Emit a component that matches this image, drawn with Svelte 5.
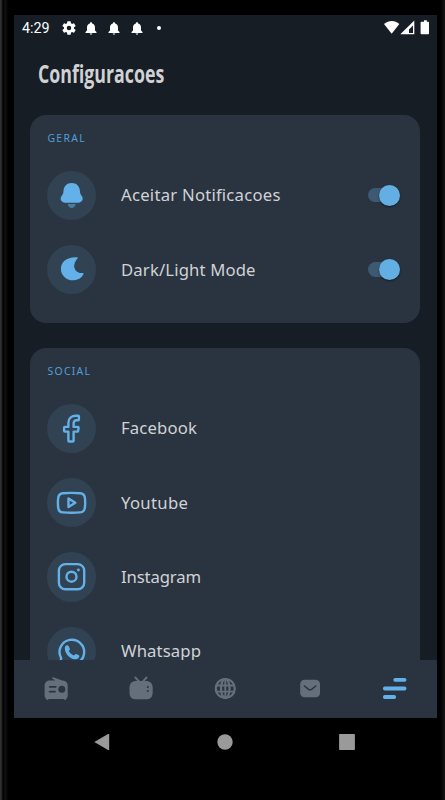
<script lang="ts">
  type Icon = 'bell' | 'moon' | 'facebook' | 'youtube' | 'instagram' | 'whatsapp'

  type Row = {
    icon: Icon
    label: string
    width: number
  }

  const socialRows: Row[] = [
    { icon: 'facebook', label: 'Facebook', width: 76 },
    { icon: 'youtube', label: 'Youtube', width: 67 },
    { icon: 'instagram', label: 'Instagram', width: 80 },
    { icon: 'whatsapp', label: 'Whatsapp', width: 80 }
  ]

  let generalRows = $state<(Row & { enabled: boolean })[]>([
    { icon: 'bell', label: 'Aceitar Notificacoes', width: 159.5, enabled: true },
    { icon: 'moon', label: 'Dark/Light Mode', width: 134.5, enabled: true }
  ])
</script>

{#snippet rowIcon(icon: Icon)}
  <svg class="row-icon" viewBox="0 0 49.3 49.3" aria-hidden="true">
    {#if icon === 'bell'}
      <path class="solid" d="M24.7 11.9c-4.9 0-8 3.5-8.2 7.9-.1 2.6-.6 3.5-1.9 5.2-2.200 3-.2 6.700 3.600 6.700h13c3.800 0 5.800-3.700 3.600-6.700-1.300-1.700-1.800-2.600-1.900-5.200-.2-4.400-3.300-7.900-8.200-7.900z" />
      <path class="solid" opacity="0.5" d="M20.7 32.700c2.200.5 5.800.5 8 0-.3 2.700-1.700 4.200-4 4.200s-3.700-1.500-4-4.200z" />
    {:else if icon === 'moon'}
      <path class="solid" d="M29.800 12.200c1-.1 1.200.6.6 1.300-3.600 4.400-4.200 9-1.400 12.200 1.600 1.800 3.800 2.500 6.500 2.300.9-.1 1.300.4.9 1.300-1.700 3.700-5.500 6-10.300 6-6.900 0-12.200-4.900-12.200-11.600 0-6.900 6-12.100 15.900-11.500z" />
    {:else if icon === 'facebook'}
      <path d="M26.600 36.700v-9.100h3.700c.5 0 .7-.2.8-.7l.5-3.200c0-.5-.2-.8-.7-.8h-4.300v-3.100c0-2.400 1.100-3.600 3-3.600h1.500c.5 0 .8-.3.8-.8v-2.800c0-.5-.3-.8-.8-.8H29c-4.500 0-7.600 2.800-7.600 7v4.100h-3.500c-.5 0-.8.3-.8.8v3.100c0 .5.3.8.8.8h3.500v9.100c0 .5.3.8.8.8h3.600c.5 0 .8-.3.8-.8z" />
    {:else if icon === 'youtube'}
      <path d="M16 15.200q8.600-.7 17.200 0 4 .3 4.600 4.200.8 5.400 0 10.800-.6 3.900-4.600 4.200-8.600.7-17.200 0-4.100-.3-4.700-4.200-.8-5.400 0-10.800.6-3.900 4.700-4.200z" />
      <path d="M21.500 20.400v8.600l6.800-4.300z" />
    {:else if icon === 'instagram'}
      <rect x="11.9" y="12.1" width="25.3" height="25.1" rx="6.5" />
      <circle cx="24.5" cy="24.7" r="5" />
      <circle class="solid" cx="31.4" cy="18" r="1.4" />
    {:else}
      <path d="M14.200 31.200a12.300 12.300 0 1 1 4.500 4.500l-5.800 1.600z" />
      <path class="solid" d="M17.900 19.900c.6-1.300 1.800-1.800 2.800-1.600.9.200 1.600 2.100 2.200 3.500.3.800-.7 1.600-1.100 2.200 1.400 2.500 3 3.600 5.200 4.500.7-.5 1.500-1.600 2.200-1.400 1.400.5 3.400 1.400 3.200 2.200-.5 1.900-2 3-4.300 2.900-5.700-.4-11.100-6.600-10.200-12.300z" />
    {/if}
  </svg>
{/snippet}

{#snippet rowLabel(row: Row)}
  <svg class="row-label" height="28" viewBox="0 0 180 28" width="180">
    <text x="0" y="20" textLength={row.width}>{row.label}</text>
  </svg>
{/snippet}

<div class="phone">
  <div class="screen">
    <header class="status-bar">
      <div class="status-left">
        <span class="time">4:29</span>
        <svg class="gear" width="14" height="14" viewBox="2 2 20 20">
          <path d="M19.14 12.94c.04-.3.06-.61.06-.94s-.02-.64-.07-.94l2.03-1.58a.5.5 0 0 0 .12-.61l-1.92-3.32a.49.49 0 0 0-.59-.22l-2.39.96a7 7 0 0 0-1.62-.94l-.36-2.54a.48.48 0 0 0-.48-.41h-3.84a.47.47 0 0 0-.47.41l-.36 2.54c-.59.24-1.13.57-1.62.94l-2.39-.96a.48.48 0 0 0-.59.22L2.74 8.87a.48.48 0 0 0 .12.61l2.03 1.58a6 6 0 0 0 0 1.88l-2.03 1.58a.5.5 0 0 0-.12.61l1.92 3.32c.12.22.37.29.59.22l2.39-.96c.5.38 1.03.7 1.62.94l.36 2.54c.05.24.24.41.48.41h3.84c.24 0 .44-.17.47-.41l.36-2.54a7 7 0 0 0 1.62-.94l2.39.96c.22.08.47 0 .59-.22l1.92-3.32a.47.47 0 0 0-.12-.61zM12 15.2a3.2 3.2 0 1 1 0-6.4 3.2 3.2 0 0 1 0 6.4z" />
        </svg>
        {#each [0, 1, 2] as bell (bell)}
          <svg class="bell" width="12" height="13" viewBox="0 0 12 13">
            <path d="M6 .2c.7 0 1.100.5 1.100 1.200 2 .5 2.900 2 2.900 4v3.200l1.500 1.500v.8H.5v-.8L2 8.600V5.400c0-2 .9-3.500 2.900-4C4.900.7 5.300.2 6 .2zM4.700 11.500h2.600c0 .7-.6 1.200-1.300 1.200s-1.300-.5-1.300-1.200z" />
          </svg>
        {/each}
        <span class="dot"></span>
      </div>
      <svg class="signals" width="47" height="16" viewBox="0 0 47 16">
        <path d="M0 4C4.500.1 11.200.1 15.300 4L7.700 13.700z" />
        <path fill-rule="evenodd" d="M30.300.4v13.800H16.300zM29 5.500l-4 4v3.600h4z" />
        <path d="M40 .3h2.800v1.400h1.500c.4 0 .7.3.7.7v11.200c0 .4-.3.7-.7.7h-7c-.4 0-.7-.3-.7-.7V2.400c0-.4.3-.7.7-.7H40z" />
      </svg>
    </header>

    <main class="content">
      <h1>Configuracoes</h1>

      <section class="card">
        <h2>GERAL</h2>
        {#each generalRows as row (row.icon)}
          <div class="row">
            <span class="circle">{@render rowIcon(row.icon)}</span>
            {@render rowLabel(row)}
            <button
              class="switch"
              class:off={!row.enabled}
              role="switch"
              aria-checked={row.enabled}
              aria-label={row.label}
              onclick={() => (row.enabled = !row.enabled)}
            >
              <span class="thumb"></span>
            </button>
          </div>
        {/each}
      </section>

      <section class="card">
        <h2>SOCIAL</h2>
        {#each socialRows as row (row.icon)}
          <div class="row">
            <span class="circle">{@render rowIcon(row.icon)}</span>
            {@render rowLabel(row)}
          </div>
        {/each}
      </section>
    </main>

    <nav class="tab-bar">
      <span class="tab">
        <svg viewBox="0 0 28 28">
          <path fill-rule="evenodd" d="M11.1 2.200l9.200 3.200c3.700.2 5.400 2 5.400 5.700v9c0 2.200-.6 3.300-1.600 3.800-.2 1.300-2.100 1.300-2.300.2H6.600c-.2 1.100-2.100 1.100-2.300-.2-1-.5-1.700-1.600-1.700-3.800v-9c0-3.700 2-5.700 5.600-5.700h5.200l-2.800-1.600c-1-.5-.5-1.900.5-1.600zM7.700 11h6c1.200 0 1.200 1.800 0 1.800h-6c-1.200 0-1.200-1.800 0-1.800zm0 4.800h5.300c1.200 0 1.200 1.800 0 1.800H7.700c-1.200 0-1.200-1.800 0-1.800zm12.100-5a3.500 3.500 0 1 0 0 7 3.500 3.500 0 0 0 0-7z" />
        </svg>
      </span>
      <span class="tab">
        <svg viewBox="0 0 28 28">
          <path class="line" stroke-width="1.9" d="M8.300 2.500l4.200 4.300M19.600 2.500l-4.100 4.300" />
          <path fill-rule="evenodd" d="M9.500 5.900h9.200c4.600 0 7 2.400 7 6.800v4.700c0 4.500-2.400 6.900-7 6.900H9.500c-4.600 0-7-2.400-7-6.900v-4.700c0-4.400 2.400-6.800 7-6.800zM20.800 10.900a1 1 0 1 0 0 2 1 1 0 0 0 0-2zm0 4a1 1 0 1 0 0 2 1 1 0 0 0 0-2z" />
        </svg>
      </span>
      <span class="tab">
        <svg viewBox="0 0 28 28">
          <g class="line" stroke-width="2.2">
            <circle cx="14.3" cy="13.5" r="9.5" />
            <ellipse cx="14.3" cy="13.5" rx="4.3" ry="9.5" />
            <path stroke-width="1.9" d="M5.500 10.500h17.600M5.500 16.600h17.600M14.300 4v19" />
          </g>
        </svg>
      </span>
      <span class="tab">
        <svg viewBox="0 0 28 28">
          <rect x="4.2" y="4.8" width="19.8" height="17.4" rx="4.3" />
          <path class="mail-line" d="M8.400 11l4.200 3.300q1.500 1 3 0l4.200-3.300" />
        </svg>
      </span>
      <span class="tab active">
        <svg viewBox="0 0 28 28">
          <rect x="12.4" y="2.900" width="13" height="3.9" rx="1.7" />
          <rect x="2" y="11.6" width="23.4" height="3.9" rx="1.7" />
          <rect x="2" y="20" width="13" height="3.9" rx="1.7" />
        </svg>
      </span>
    </nav>
  </div>

  <div class="system-nav">
    <svg width="18" height="18" viewBox="0 0 18 18"><path d="M1.300 9 15 1q1.200-.4 1.200.5v15q0 .9-1.200.5z" /></svg>
    <svg width="18" height="18" viewBox="0 0 18 18"><circle cx="9" cy="9" r="7.7" /></svg>
    <svg width="18" height="18" viewBox="0 0 18 18"><rect x="1.1" y="1.1" width="15.8" height="15.8" rx=".7" /></svg>
  </div>
</div>

<style>
  :global(body) {
    margin: 0;
    background: #000;
  }

  .phone {
    box-sizing: border-box;
    width: 445px;
    height: 800px;
    padding: 15px 8px 0 14px;
    overflow: hidden;
    background:
      linear-gradient(90deg, #303030 0 1px, #1a1a1a 2px, #000 3px, #121212 5px, #000 8px) left / 8px 100% no-repeat,
      linear-gradient(90deg, #000, #0c0c0c 3px, #161616 5px) right / 5px 100% no-repeat,
      #000;
  }

  .screen {
    display: flex;
    flex-direction: column;
    height: 703px;
    background: #161d25;
  }

  .status-bar {
    display: flex;
    flex: none;
    justify-content: space-between;
    height: 26px;
    fill: #fff;
    color: #fff;
  }

  .status-left {
    display: flex;
    align-items: center;
    padding-left: 8px;
  }

  .time {
    width: 39.5px;
    font: 14.3px/26px Roboto, sans-serif;
  }

  .gear {
    margin-right: 9.5px;
  }

  .bell {
    margin-right: 10.8px;
  }

  .dot {
    width: 4.5px;
    height: 4.5px;
    margin-left: 3.5px;
    border-radius: 50%;
    background: #fff;
  }

  .signals {
    margin: 5px 6px 0 0;
  }

  .content {
    display: flex;
    flex: 1;
    flex-direction: column;
    gap: 25px;
    min-height: 0;
    padding: 0 17px 0 16px;
    overflow: hidden;
  }

  h1 {
    height: 36px;
    margin: 15px 0 -2px 8px;
    color: #d0d1d3;
    font: 700 24.5px/36px 'Open Sans', sans-serif;
    transform: scaleX(0.725);
    transform-origin: left;
  }

  .card {
    flex: none;
    box-sizing: border-box;
    height: 208px;
    padding: 15px 17px 0;
    border-radius: 16px;
    background: #2a3440;
  }

  .card + .card {
    height: 360px;
  }

  h2 {
    height: 16px;
    margin: 0 0 12px 0.5px;
    color: #509fd8;
    font: 400 10.4px/16px 'Noto Sans', sans-serif;
    letter-spacing: 1.3px;
  }

  .row {
    display: flex;
    align-items: center;
    height: 74.4px;
  }

  .circle {
    flex: none;
    width: 49.3px;
    height: 49.3px;
    margin-right: 24.7px;
    border-radius: 50%;
    background: #314252;
  }

  .row-icon {
    display: block;
    width: 100%;
    height: 100%;
    fill: none;
    stroke: #63b1e8;
    stroke-width: 2.4;
    stroke-linecap: round;
    stroke-linejoin: round;
  }

  .solid {
    fill: #63b1e8;
    stroke: none;
  }

  .row-label {
    fill: #d0d2d5;
    font: 400 16.7px 'Noto Sans', sans-serif;
  }

  .switch {
    display: flex;
    align-items: center;
    justify-content: flex-end;
    width: 32px;
    height: 14.5px;
    margin-left: auto;
    margin-right: 3px;
    padding: 0;
    border: 0;
    border-radius: 8px;
    background: #3d5a72;
  }

  .thumb {
    flex: none;
    width: 21px;
    height: 21px;
    border-radius: 50%;
    background: #63aee2;
    box-shadow: 0 1px 2px rgba(0, 0, 0, 0.55);
  }

  .switch.off {
    justify-content: flex-start;
  }

  .switch.off .thumb {
    background: #8c98a3;
  }

  .tab-bar {
    display: flex;
    flex: none;
    height: 58px;
    background: #2a3440;
  }

  .tab {
    display: flex;
    flex: 1;
    align-items: center;
    justify-content: center;
    fill: #646f7b;
  }

  .tab svg {
    width: 28px;
    height: 28px;
  }

  .tab.active {
    fill: #63b1e8;
  }

  .line {
    fill: none;
    stroke: #646f7b;
    stroke-linecap: round;
  }

  .mail-line {
    fill: none;
    stroke: #2a3440;
    stroke-width: 1.5;
    stroke-linecap: round;
  }

  .system-nav {
    display: flex;
    justify-content: space-between;
    padding: 15px 81px 0 79px;
    fill: #9a9a9a;
  }
</style>
